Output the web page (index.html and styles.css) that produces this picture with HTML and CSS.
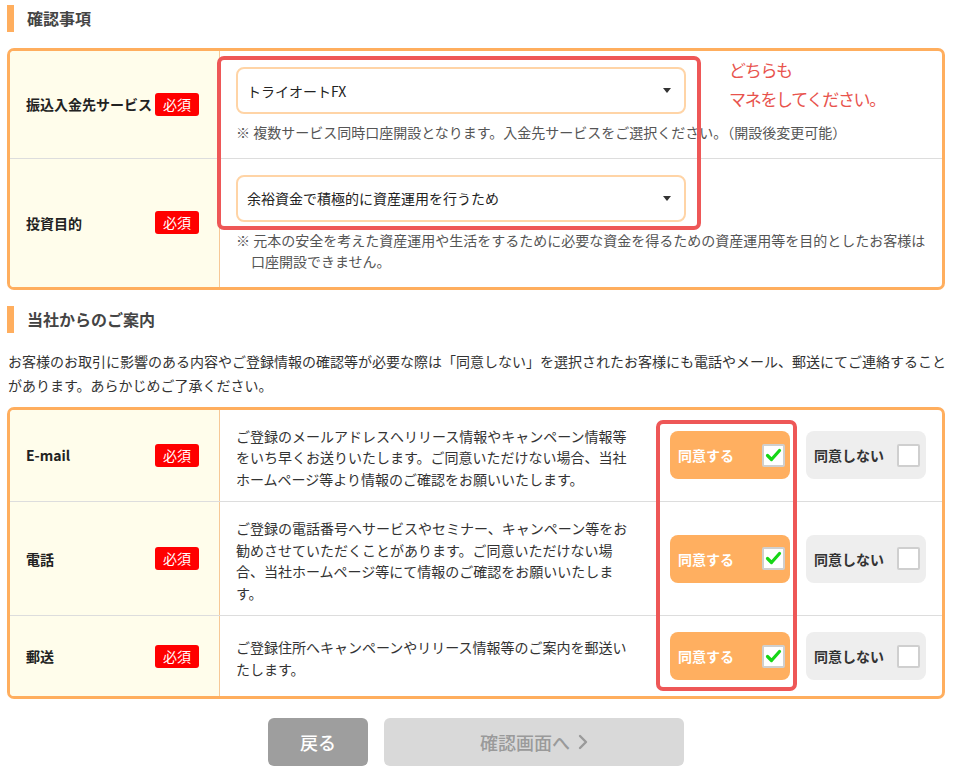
FILE: index.html
```html
<!DOCTYPE html>
<html lang="ja">
<head>
<meta charset="utf-8">
<title>確認事項</title>
<link rel="stylesheet" href="styles.css">
</head>
<body>
<div class="page">
  <h2 class="heading">確認事項</h2>
  <div class="table t1">
    <div class="row">
      <div class="label"><span class="label-text">振込入金先サービス</span><span class="badge">必須</span></div>
      <div class="content">
        <div class="select"><span>トライオートFX</span><span class="arrow"></span></div>
        <p class="note">※ 複数サービス同時口座開設となります。入金先サービスをご選択ください。（開設後変更可能）</p>
      </div>
    </div>
    <div class="row">
      <div class="label"><span class="label-text">投資目的</span><span class="badge">必須</span></div>
      <div class="content">
        <div class="select"><span>余裕資金で積極的に資産運用を行うため</span><span class="arrow"></span></div>
        <p class="note hang">※ 元本の安全を考えた資産運用や生活をするために必要な資金を得るための資産運用等を目的としたお客様は<br>口座開設できません。</p>
      </div>
    </div>
  </div>

  <h2 class="heading h2">当社からのご案内</h2>
  <p class="lead">お客様のお取引に影響のある内容やご登録情報の確認等が必要な際は「同意しない」を選択されたお客様にも電話やメール、郵送にてご連絡すること<br>があります。あらかじめご了承ください。</p>

  <div class="table t2">
    <div class="row">
      <div class="label"><span class="label-text">E-mail</span><span class="badge">必須</span></div>
      <div class="content inline">
        <p class="desc">ご登録のメールアドレスへリリース情報やキャンペーン情報等をいち早くお送りいたします。ご同意いただけない場合、当社ホームページ等より情報のご確認をお願いいたします。</p>
        <div class="choices">
          <div class="choice on">同意する<span class="cb"><svg viewBox="0 0 19 19" width="19" height="19"><polyline points="3.5,9.5 7.5,13.5 15.5,4.5" fill="none" stroke="#16d616" stroke-width="3.2" stroke-linecap="round" stroke-linejoin="round"/></svg></span></div>
          <div class="choice off">同意しない<span class="cb"></span></div>
        </div>
      </div>
    </div>
    <div class="row">
      <div class="label"><span class="label-text">電話</span><span class="badge">必須</span></div>
      <div class="content inline">
        <p class="desc">ご登録の電話番号へサービスやセミナー、キャンペーン等をお勧めさせていただくことがあります。ご同意いただけない場合、当社ホームページ等にて情報のご確認をお願いいたします。</p>
        <div class="choices">
          <div class="choice on">同意する<span class="cb"><svg viewBox="0 0 19 19" width="19" height="19"><polyline points="3.5,9.5 7.5,13.5 15.5,4.5" fill="none" stroke="#16d616" stroke-width="3.2" stroke-linecap="round" stroke-linejoin="round"/></svg></span></div>
          <div class="choice off">同意しない<span class="cb"></span></div>
        </div>
      </div>
    </div>
    <div class="row">
      <div class="label"><span class="label-text">郵送</span><span class="badge">必須</span></div>
      <div class="content inline">
        <p class="desc">ご登録住所へキャンペーンやリリース情報等のご案内を郵送いたします。</p>
        <div class="choices">
          <div class="choice on">同意する<span class="cb"><svg viewBox="0 0 19 19" width="19" height="19"><polyline points="3.5,9.5 7.5,13.5 15.5,4.5" fill="none" stroke="#16d616" stroke-width="3.2" stroke-linecap="round" stroke-linejoin="round"/></svg></span></div>
          <div class="choice off">同意しない<span class="cb"></span></div>
        </div>
      </div>
    </div>
  </div>

  <div class="actions">
    <button class="btn back" type="button">戻る</button>
    <button class="btn next" type="button">確認画面へ<svg class="chev" viewBox="0 0 10 16" width="10" height="16"><polyline points="2,2 8,8 2,14" fill="none" stroke="#9a9a9a" stroke-width="2.4" stroke-linecap="round" stroke-linejoin="round"/></svg></button>
  </div>

  <div class="hl hl1"></div>
  <div class="hl hl2"></div>
  <div class="memo">どちらも<br>マネをしてください。</div>
</div>
</body>
</html>
```

FILE: styles.css
```css
* { box-sizing: border-box; }

body {
  margin: 0;
  background: #fff;
  color: #333;
  font-family: "Noto Sans CJK JP", "Noto Sans", sans-serif;
}

.page {
  position: relative;
  width: 954px;
  padding: 5px 9px 0 7px;
}

.heading {
  margin: 0;
  height: 27px;
  line-height: 27px;
  border-left: 7px solid #ffae5e;
  padding-left: 13px;
  font-size: 16px;
  font-weight: 700;
  color: #444;
}

.heading.h2 { margin-top: 16px; }

.table {
  width: 938px;
  border: 3px solid #ffae5e;
  border-radius: 7px;
  overflow: hidden;
}

.t1 { margin-top: 16px; }
.t2 { margin-top: 10px; }

.row {
  display: flex;
  border-top: 1px solid #ddd;
}
.row:first-child { border-top: 0; }

.label {
  flex: none;
  width: 210px;
  background: #fffdeb;
  border-right: 1px solid #f7c896;
  display: flex;
  align-items: center;
  justify-content: space-between;
  padding: 0 20px 0 16px;
  white-space: nowrap;
}

.label-text {
  font-size: 14px;
  font-weight: 700;
  color: #222;
}

.badge {
  width: 44px;
  height: 23px;
  line-height: 23px;
  text-align: center;
  background: #ff0000;
  color: #fff;
  font-size: 14px;
  border-radius: 3px;
}

.content {
  flex: 1;
  padding: 16px 10px 14px 16px;
}

.select {
  width: 450px;
  height: 47px;
  border: 2px solid #ffd4a6;
  border-radius: 8px;
  display: flex;
  align-items: center;
  justify-content: space-between;
  padding: 0 13px 0 9px;
  font-size: 14px;
  color: #222;
  background: #fff;
}

.arrow {
  width: 0;
  height: 0;
  border-left: 4px solid transparent;
  border-right: 4px solid transparent;
  border-top: 5px solid #333;
}

.note {
  margin: 8px 0 0;
  font-size: 14px;
  line-height: 21.5px;
  color: #555;
  white-space: nowrap;
}

.note.hang {
  padding-left: 15px;
  text-indent: -15px;
}

.lead {
  margin: 16px -9px 0 1px;
  font-size: 14px;
  line-height: 24px;
  color: #333;
  white-space: nowrap;
}

.content.inline {
  display: flex;
  align-items: center;
  padding: 0 16px;
}

.desc {
  width: 398px;
  margin: 0;
  padding: 16px 0 11px;
  font-size: 14px;
  line-height: 21.5px;
  color: #333;
}

.choices {
  margin-left: auto;
  display: flex;
  gap: 16px;
  padding: 16px 0;
}

.choice {
  width: 120px;
  height: 48px;
  border-radius: 8px;
  display: flex;
  align-items: center;
  justify-content: space-between;
  font-size: 14px;
  font-weight: 700;
  white-space: nowrap;
}

.choice.on {
  background: #ffaf60;
  color: #fff;
  padding: 0 5px 0 8px;
}

.choice.off {
  background: #eeeeee;
  color: #333;
  padding: 0 6px 0 8px;
}

.cb {
  width: 23px;
  height: 23px;
  border: 2px solid #cfcfcf;
  border-radius: 2px;
  background: #fff;
  display: flex;
  align-items: center;
  justify-content: center;
}

.actions {
  width: 938px;
  display: flex;
  justify-content: center;
  gap: 16px;
  margin-top: 19px;
}

.btn {
  height: 48px;
  border: 0;
  border-radius: 6px;
  font-family: inherit;
  font-size: 18px;
  font-weight: 500;
  display: flex;
  align-items: center;
  justify-content: center;
  gap: 8px;
}

.btn.back {
  width: 100px;
  background: #9e9e9e;
  color: #fff;
}

.btn.next {
  width: 300px;
  background: #d9d9d9;
  color: #9a9a9a;
}

.hl {
  position: absolute;
  border: 4px solid #ee5757;
  border-radius: 7px;
}

.hl1 { left: 217px; top: 56px; width: 484px; height: 174px; }
.hl2 { left: 656px; top: 420px; width: 141px; height: 271px; }

.memo {
  position: absolute;
  left: 729px;
  top: 55px;
  color: #e8534d;
  font-size: 17px;
  line-height: 29px;
  letter-spacing: -1.3px;
}
```
